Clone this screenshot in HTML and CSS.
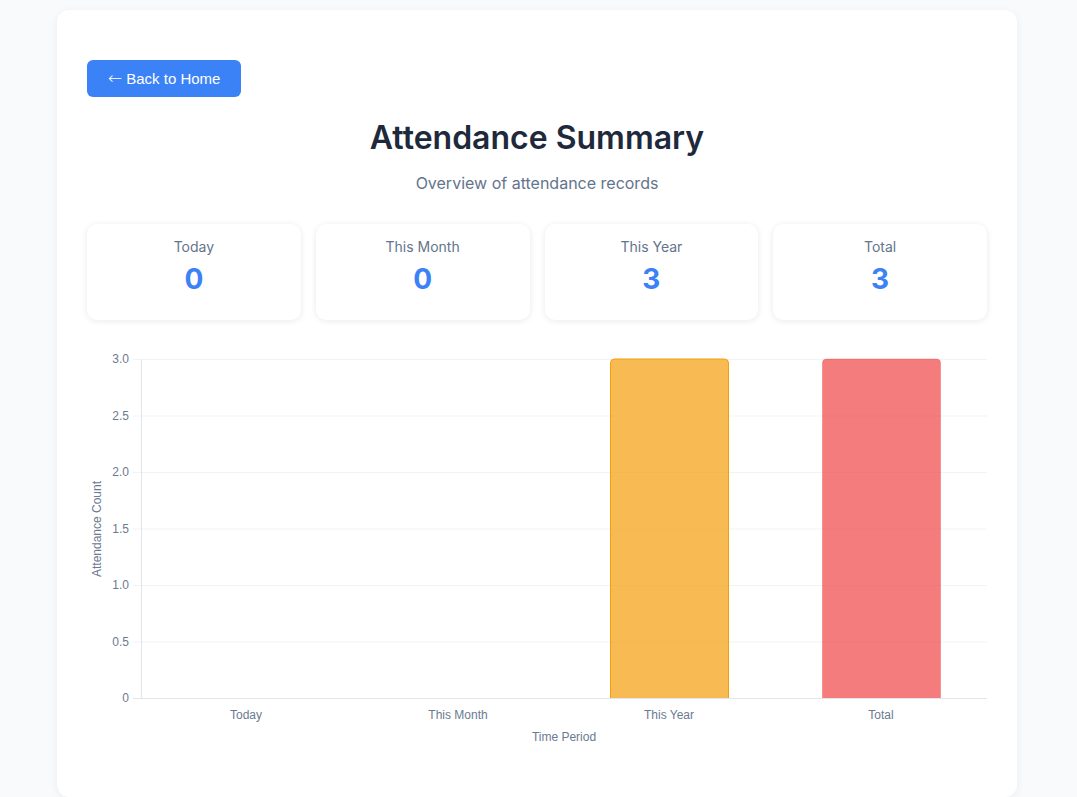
FILE: index.html
```html
<!DOCTYPE html>
<html lang="en">
<head>
<meta charset="utf-8">
<title>Attendance Summary</title>
<link rel="stylesheet" href="styles.css">
</head>
<body>
<div class="page">
  <main class="card">
    <div class="toolbar">
      <a class="back-btn" href="#"><span class="arrow">←</span> Back to Home</a>
    </div>
    <h1 class="title">Attendance Summary</h1>
    <p class="subtitle">Overview of attendance records</p>

    <section class="stats">
      <div class="stat"><div class="stat-label">Today</div><div class="stat-value">0</div></div>
      <div class="stat"><div class="stat-label">This Month</div><div class="stat-value">0</div></div>
      <div class="stat"><div class="stat-label">This Year</div><div class="stat-value">3</div></div>
      <div class="stat"><div class="stat-label">Total</div><div class="stat-value">3</div></div>
    </section>

    <div class="chart">
      <svg class="chart-svg" width="900" height="400" viewBox="0 0 900 400">
        <g class="grid">
          <line x1="46" y1="9.5" x2="900" y2="9.5"/>
          <line x1="46" y1="66" x2="900" y2="66"/>
          <line x1="46" y1="122.5" x2="900" y2="122.5"/>
          <line x1="46" y1="179" x2="900" y2="179"/>
          <line x1="46" y1="235.5" x2="900" y2="235.5"/>
          <line x1="46" y1="292" x2="900" y2="292"/>
        </g>
        <line class="axis" x1="54.5" y1="9" x2="54.5" y2="348"/>
        <line class="axis" x1="46" y1="348.5" x2="900" y2="348.5"/>
        <g class="ticks" text-anchor="end">
          <text x="42" y="13">3.0</text>
          <text x="42" y="70">2.5</text>
          <text x="42" y="126">2.0</text>
          <text x="42" y="183">1.5</text>
          <text x="42" y="239">1.0</text>
          <text x="42" y="296">0.5</text>
          <text x="42" y="352">0</text>
        </g>
        <path class="bar-year" d="M523.5,348 V13 a4,4 0 0 1 4,-4 H637.5 a4,4 0 0 1 4,4 V348"/>
        <path class="bar-total" d="M735.5,348 V13 a4,4 0 0 1 4,-4 H849.5 a4,4 0 0 1 4,4 V348"/>
        <g class="ticks" text-anchor="middle">
          <text x="159" y="369">Today</text>
          <text x="371" y="369">This Month</text>
          <text x="582" y="369">This Year</text>
          <text x="794" y="369">Total</text>
        </g>
        <text class="axis-title" x="477" y="391" text-anchor="middle">Time Period</text>
        <text class="axis-title" transform="translate(14 179) rotate(-90)" text-anchor="middle">Attendance Count</text>
      </svg>
    </div>
  </main>
</div>
</body>
</html>
```

FILE: styles.css
```css
* { box-sizing: border-box; }

html, body {
  margin: 0;
  padding: 0;
  background: #f8fafc;
}

body {
  font-family: Inter, "Noto Sans", sans-serif;
  color: #1e293b;
}

.page {
  padding: 10px 3px 0 0;
}

.card {
  width: 960px;
  margin: 0 auto;
  background: #ffffff;
  border-radius: 12px;
  box-shadow: 0 2px 10px rgba(15, 23, 42, 0.06);
  padding: 50px 30px 47px;
}

.toolbar {
  display: flex;
}

.back-btn {
  display: inline-flex;
  align-items: center;
  gap: 4px;
  background: #3b82f6;
  color: #ffffff;
  text-decoration: none;
  font-family: "Liberation Sans", Arial, sans-serif;
  font-size: 15px;
  line-height: 17px;
  height: 37px;
  padding: 0 21px;
  border-radius: 6px;
}

.arrow {
  font-family: "DejaVu Sans", sans-serif;
  font-size: 17px;
  line-height: 17px;
  font-weight: 300;
}

.title {
  margin: 22px 0 14px;
  text-align: center;
  font-size: 32px;
  line-height: 38px;
  font-weight: 600;
  color: #1e293b;
}

.subtitle {
  margin: 0 0 29px;
  text-align: center;
  font-size: 16px;
  line-height: 24px;
  color: #64748b;
}

.stats {
  display: grid;
  grid-template-columns: repeat(4, 1fr);
  gap: 15px;
}

.stat {
  background: #ffffff;
  border-radius: 10px;
  box-shadow: 0 1px 6px rgba(15, 23, 42, 0.09);
  text-align: center;
  padding: 14px 15px 0;
  height: 96px;
}

.stat-label {
  font-size: 14px;
  line-height: 17px;
  color: #64748b;
  margin-bottom: 7px;
}

.stat-value {
  font-size: 28px;
  line-height: 34px;
  font-weight: 700;
  color: #3b82f6;
}

.chart {
  margin-top: 30px;
}

.chart-svg {
  display: block;
  font-family: "Liberation Sans", Arial, sans-serif;
}

.grid line {
  stroke: #f1f3f6;
  stroke-width: 1;
}

.axis {
  stroke: #e2e5ea;
  stroke-width: 1;
}

.ticks text {
  font-size: 12px;
  fill: #6b7a90;
}

.axis-title {
  font-size: 12px;
  fill: #6b7a90;
}

.bar-year {
  fill: rgba(245, 158, 11, 0.7);
  stroke: #f59e0b;
  stroke-width: 1;
}

.bar-total {
  fill: rgba(239, 68, 68, 0.7);
  stroke: rgba(239, 68, 68, 0.35);
  stroke-width: 1;
}
```
